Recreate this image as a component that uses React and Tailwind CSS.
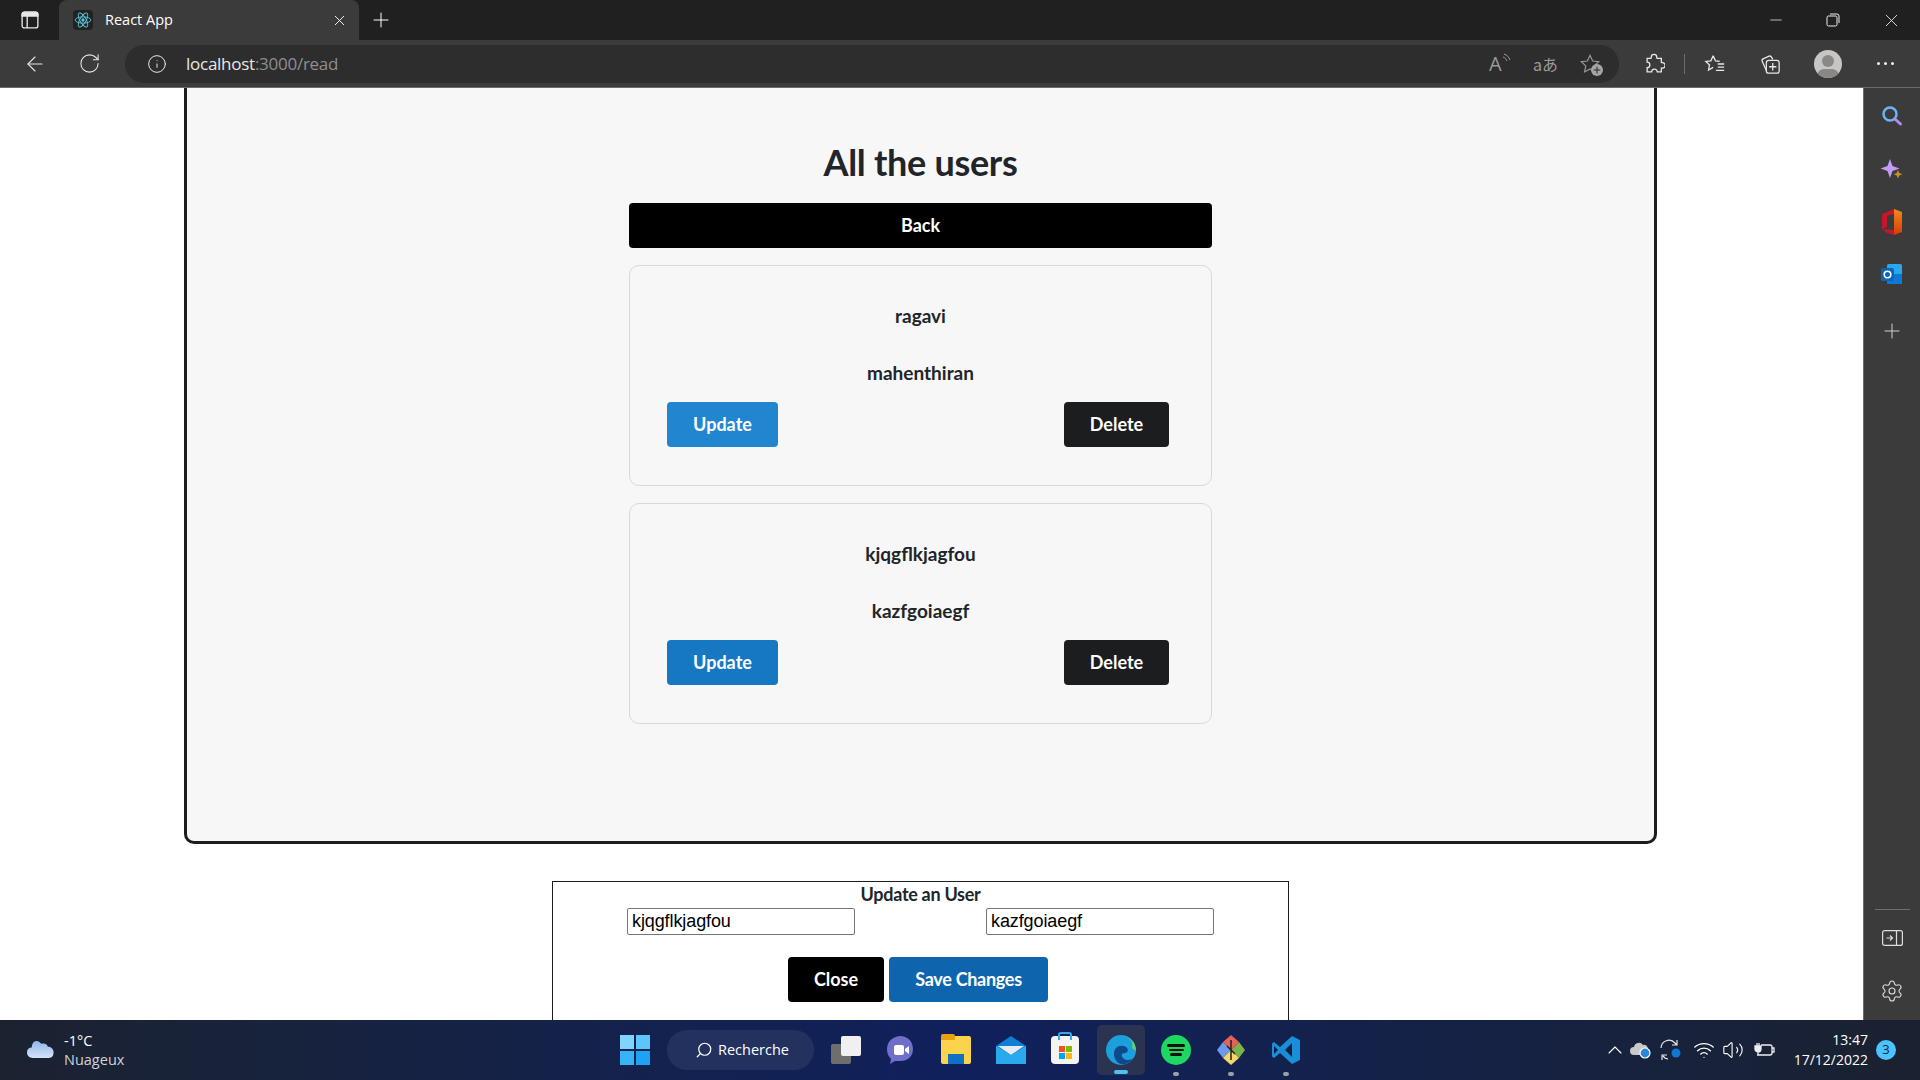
import React from "react";
import { ArrowLeft, RotateCw, Info, Plus, X, Minus, Settings, ChevronUp, Search, Wifi, Volume2 } from "lucide-react";

const lato = { fontFamily: "Lato, sans-serif" };
const openSans = { fontFamily: "'Open Sans', sans-serif" };

// browser tab strip + address bar
const ReactLogo = () => (
  <svg width="18" height="18" viewBox="-12 -12 24 24" fill="none" stroke="#58c4dc" strokeWidth="1.2">
    <circle r="2.2" fill="#58c4dc" stroke="none" />
    <ellipse rx="10.5" ry="4.2" />
    <ellipse rx="10.5" ry="4.2" transform="rotate(60)" />
    <ellipse rx="10.5" ry="4.2" transform="rotate(120)" />
  </svg>
);

const TabStrip = () => (
  <div className="flex h-10 bg-[#202020] text-white">
    <div className="flex w-[59px] items-center justify-end pr-[20px]">
      <svg width="18" height="18" viewBox="0 0 16 16" fill="none" stroke="#e8e8e8" strokeWidth="1.2">
        <rect x="1" y="1" width="14" height="14" rx="2" />
        <path d="M1 4.5h14V3a2 2 0 0 0-2-2H3a2 2 0 0 0-2 2z" fill="#e8e8e8" />
        <path d="M5.5 4.5V15" />
      </svg>
    </div>
    <div className="flex w-[300px] items-center rounded-t-lg bg-[#3b3b3b] pl-[14px] pr-[11px]">
      <div className="flex h-[20px] w-[20px] items-center justify-center rounded-sm bg-[#222]">
        <ReactLogo />
      </div>
      <span className="ml-[12px] flex-1 text-[14.5px] text-white" style={openSans}>React App</span>
      <X size={17} strokeWidth={1.3} />
    </div>
    <div className="flex w-[44px] items-center justify-center">
      <Plus size={24} strokeWidth={1} />
    </div>
    <div className="flex-1" />
    <div className="flex items-center text-[#eee]">
      <div className="flex w-[58px] justify-center pl-[2px]"><Minus size={18} strokeWidth={1} /></div>
      <div className="flex w-[58px] justify-center">
        <svg width="14" height="14" viewBox="0 0 14 14" fill="none" stroke="currentColor" strokeWidth="1">
          <rect x="1" y="3" width="10" height="10" rx="1.5" />
          <path d="M4 1h7a2 2 0 0 1 2 2v7" />
        </svg>
      </div>
      <div className="flex w-[58px] justify-center"><X size={21} strokeWidth={1} /></div>
    </div>
  </div>
);

const Toolbar = () => (
  <div className="flex h-12 items-center border-b border-[#6a6a6a] bg-[#3b3b3b] text-[#e8e8e8]">
    <div className="flex w-[125px] shrink-0 items-center pl-[23px]">
      <ArrowLeft size={24} strokeWidth={1.1} />
      <RotateCw size={23} strokeWidth={1.1} className="ml-[31px]" />
    </div>
    <div className="flex h-[38px] w-[1494px] items-center rounded-full bg-[#2d2d2d] pl-[22px] pr-[18px]">
      <Info size={20} strokeWidth={1.2} />
      <span className="ml-[19px] flex-1 text-[17px]" style={{ ...openSans, letterSpacing: "-0.26px" }}>
        localhost<span className="text-[#8e8e8e]">:3000/read</span>
      </span>
      <div className="flex items-center text-[#9a9a9a]">
        <div className="relative mr-[20px] h-[24px] w-[24px]">
          <span className="absolute left-0 top-[2px] text-[20px] leading-none" style={openSans}>A</span>
          <svg className="absolute right-0 top-[1px]" width="11" height="11" viewBox="0 0 11 11" fill="none" stroke="currentColor" strokeWidth="1">
            <path d="M2 1c3 1 5 3 6 6M1 4c2 .7 3 1.700 4 4" />
          </svg>
        </div>
        <span className="mr-[21px] text-[16px] leading-none" style={{ fontFamily: "'Noto Sans CJK JP', sans-serif" }}>aあ</span>
        <div className="relative">
          <svg width="22" height="22" viewBox="0 0 24 24" fill="none" stroke="currentColor" strokeWidth="1.3">
            <path d="M12 2.5l2.9 6.2 6.6.8-4.9 4.6 1.3 6.6-5.9-3.3-5.9 3.3 1.3-6.6-4.9-4.6 6.6-.8z" />
          </svg>
          <div className="absolute bottom-[-1px] right-[-2px] flex h-[12px] w-[12px] items-center justify-center rounded-full bg-[#a5a5a5] text-[#2d2d2d]">
            <Plus size={10} strokeWidth={2.5} />
          </div>
        </div>
      </div>
    </div>
    <div className="flex flex-1 items-center pl-[24px]">
      <svg width="22" height="22" viewBox="0 0 24 24" fill="none" stroke="currentColor" strokeWidth="1.4">
        <path d="M9 4.500a3 3 0 0 1 6 0c0 .5 0 1 .3 1.300H20v4.500c.3.3.8.3 1.200.3a2.900 2.900 0 0 1 0 5.800H20v4.100h-4.500a3 3 0 0 0-6 0H4.500V16a3 3 0 0 0 0-6V5.800h4.200C9 5.500 9 5 9 4.500z" />
      </svg>
      <div className="ml-[19px] h-[20px] w-px bg-[#6e6e6e]" />
      <svg className="ml-[19px]" width="22" height="22" viewBox="0 0 24 24" fill="none" stroke="currentColor" strokeWidth="1.4">
        <path d="M10 3l2.500 5.500 4.500.5M10 3L7.500 8.500 2 9.200l4 3.800-1 5.500 5-2.800M15 12h7M15 15.500h7M13 19h9" />
      </svg>
      <svg className="ml-[33px]" width="22" height="22" viewBox="0 0 24 24" fill="none" stroke="currentColor" strokeWidth="1.4">
        <path d="M8 19L3.500 9a2 2 0 0 1 1-2.600L11 3.500a2 2 0 0 1 2.600 1L15 7" />
        <rect x="8" y="8" width="14" height="14" rx="2.500" />
        <path d="M15 11v8M11 15h8" />
      </svg>
      <div className="relative ml-[33px] h-[28px] w-[28px] overflow-hidden rounded-full bg-[#c8c6c4]">
        <div className="mx-auto mt-[5px] h-[12px] w-[12px] rounded-full bg-[#8a8886]" />
        <div className="mx-auto mt-[2px] h-[14px] w-[22px] rounded-full bg-[#8a8886]" />
      </div>
      <div className="ml-[35px] flex gap-[4px]">
        <span className="h-[3px] w-[3px] rounded-full bg-[#eee]" />
        <span className="h-[3px] w-[3px] rounded-full bg-[#eee]" />
        <span className="h-[3px] w-[3px] rounded-full bg-[#eee]" />
      </div>
    </div>
  </div>
);

const UserCard = ({ first, last, updateBg }) => (
  <div className="mt-[17px] h-[221px] rounded-[10px] border border-[#d9d9d9] px-[37px] pt-[38px]">
    <p className="text-center text-[19px] font-bold leading-[24px] text-[#212529]">{first}</p>
    <p className="mt-[33px] text-center text-[19px] font-bold leading-[24px] text-[#212529]">{last}</p>
    <div className="mt-[17px] flex justify-between pr-[5px]">
      <button className={`h-[45px] w-[111px] rounded-[4px] text-[18px] font-bold text-white ${updateBg}`}>Update</button>
      <button className="h-[45px] w-[105px] rounded-[4px] bg-[#1c1d1f] text-[18px] font-bold text-white">Delete</button>
    </div>
  </div>
);

const Page = () => (
  <div className="h-full overflow-hidden bg-white" style={lato}>
    <div className="ml-[184px] h-[756px] w-[1473px] rounded-b-[10px] border-x-[3px] border-b-[3px] border-[#1c1d1f] bg-[#f7f7f7]">
      <div className="mx-auto w-[583px]">
        <h1 className="pt-[51px] text-center text-[36px] font-bold leading-[46px] tracking-[-0.3px] text-[#212529]">All the users</h1>
        <button className="mt-[18px] h-[45px] w-full rounded-[4px] bg-black text-[18px] font-bold text-white">Back</button>
        <UserCard first="ragavi" last="mahenthiran" updateBg="bg-[#2185d0]" />
        <UserCard first="kjqgflkjagfou" last="kazfgoiaegf" updateBg="bg-[#1678c2]" />
      </div>
    </div>
    <div className="ml-[552px] mt-[37px] h-[160px] w-[737px] border border-[#1c1d1f]">
      <p className="text-center text-[18px] font-bold leading-[24px] tracking-[-0.3px] text-[#212529]">Update an User</p>
      <div className="ml-[74px] mt-[2px] flex gap-[131px]">
        <input readOnly value="kjqgflkjagfou" className="h-[27px] w-[228px] rounded-[2px] border border-[#767676] bg-white px-[4px] text-[18px] tracking-[-0.1px] text-black" style={{ fontFamily: "'Liberation Sans', sans-serif" }} />
        <input readOnly value="kazfgoiaegf" className="h-[27px] w-[228px] rounded-[2px] border border-[#767676] bg-white px-[4px] text-[18px] tracking-[-0.1px] text-black" style={{ fontFamily: "'Liberation Sans', sans-serif" }} />
      </div>
      <div className="ml-[235px] mt-[22px] flex gap-[5px]">
        <button className="h-[45px] w-[96px] rounded-[4px] bg-black text-[18px] font-bold text-white">Close</button>
        <button className="h-[45px] w-[159px] rounded-[4px] bg-[#0f65ad] text-[18px] font-bold tracking-[-0.3px] text-white">Save Changes</button>
      </div>
    </div>
  </div>
);

const Sidebar = () => (
  <div className="flex w-[57px] shrink-0 flex-col items-center border-l border-[#6a6a6a] bg-[#3b3b3b] pt-[17px]">
    <svg width="22" height="22" viewBox="0 0 22 22" fill="none">
      <circle cx="9" cy="9" r="6.500" stroke="#6cb4f5" strokeWidth="2.500" />
      <path d="M14.500 14.500l5 4.500" stroke="#b28cf0" strokeWidth="3" strokeLinecap="round" />
    </svg>
    <svg className="mt-[31px]" width="24" height="24" viewBox="0 0 24 24">
      <path d="M10 1l2.500 7 7 2.500-7 2.500L10 20l-2.500-7-7-2.500 7-2.500z" fill="#c39cf5" />
      <path d="M18 12l1.300 3 3 1.300-3 1.300-1.300 3-1.300-3-3-1.300 3-1.300z" fill="#c8941f" />
    </svg>
    <svg className="mt-[27px]" width="22" height="26" viewBox="0 0 22 26">
      <defs>
        <linearGradient id="officeRight" x1="0" y1="0" x2="0" y2="1">
          <stop offset="0" stopColor="#f08a1d" />
          <stop offset="1" stopColor="#d83b01" />
        </linearGradient>
      </defs>
      <path d="M13 0l8 3v20l-8 3z" fill="url(#officeRight)" />
      <path d="M13 0L1 5v15l5-2V7l7-2zM13 26l-7-2-5-4 12 1z" fill="#c4162c" />
    </svg>
    <svg className="mt-[28px]" width="22" height="22" viewBox="0 0 22 22">
      <rect x="6" y="1" width="15" height="20" rx="1.500" fill="#28a8ea" />
      <path d="M6 11l15 0v8a2 2 0 0 1-2 2H6z" fill="#0f78d4" />
      <rect x="0" y="5" width="13" height="13" rx="1.500" fill="#0a64b8" />
      <circle cx="6.500" cy="11.500" r="3.300" fill="none" stroke="#fff" strokeWidth="1.600" />
    </svg>
    <Plus size={24} strokeWidth={1} className="mt-[34px] text-[#d0d0d0]" />
    <div className="flex-1" />
    <div className="h-px w-[35px] bg-[#6e6e6e]" />
    <svg className="mt-[20px]" width="21" height="16" viewBox="0 0 21 16" fill="none" stroke="#ddd" strokeWidth="1.200">
      <rect x=".6" y=".6" width="19.800" height="14.800" rx="2" />
      <path d="M14.500 .6v14.800M4.500 8h6M8 5.500L10.500 8 8 10.500" />
    </svg>
    <Settings size={24} strokeWidth={1.1} className="mb-[17px] mt-[33px] text-[#ddd]" />
  </div>
);

const Dot = () => <span className="absolute bottom-[-11px] h-[4px] w-[6px] rounded-full bg-[#9aa0aa]" />;

const Taskbar = () => (
  <div className="flex h-[60px] items-center bg-gradient-to-r from-[#1b2230] via-[#10205c] to-[#1a2130] text-white" style={openSans}>
    <div className="flex w-[600px] items-center pl-[26px]">
      <svg width="30" height="20" viewBox="0 0 30 20">
        <defs>
          <linearGradient id="cloudFill" x1="0" y1="0" x2="0" y2="1">
            <stop offset="0" stopColor="#8fb6ea" />
            <stop offset="1" stopColor="#d4e4f8" />
          </linearGradient>
        </defs>
        <path d="M7 2C10 0 13 1 15 4c3-1 6 0 7 3 3 0 6 2 6 6 0 4-2 6-5 6H6c-3 0-6-2-6-6 0-3 2-5 5-5 0-3 1-5 2-6z" transform="translate(1 0) scale(.95)" fill="url(#cloudFill)" />
      </svg>
      <div className="ml-[8px] text-[14.5px] leading-[19px]">
        <div>-1°C</div>
        <div className="text-[#cfd3da]">Nuageux</div>
      </div>
    </div>
    <div className="flex flex-1 items-center pl-[20px]">
      <div className="grid grid-cols-2 gap-[2px]">
        <span className="h-[14px] w-[14px] bg-[#7fd4fb]" />
        <span className="h-[14px] w-[14px] bg-[#5cc5fa]" />
        <span className="h-[14px] w-[14px] bg-[#39b3f8]" />
        <span className="h-[14px] w-[14px] bg-[#1ea2f3]" />
      </div>
      <div className="ml-[17px] flex h-[40px] w-[147px] items-center rounded-full bg-[#23315f] pl-[28px] text-[14.5px]">
        <Search size={18} strokeWidth={1.6} className="-scale-x-100" />
        <span className="ml-[5px]">Recherche</span>
      </div>
      <div className="relative ml-[17px] h-[28px] w-[30px]">
        <div className="absolute bottom-0 left-0 h-[20px] w-[20px] rounded-[2px] bg-[#6e6e6e]" />
        <div className="absolute right-0 top-0 h-[20px] w-[20px] rounded-[2px] bg-[#f0f0f0]" />
      </div>
      <svg className="ml-[25px]" width="29" height="30" viewBox="0 0 29 30">
        <path d="M14.500 1C21 1 27 6 27 14c0 8-6 12-12 12H9l-5 3 1-5C2 21 1 18 1 14 1 6 8 1 14.500 1z" fill="#6f6ec9" />
        <rect x="8" y="10" width="10" height="10" rx="2" fill="#fff" />
        <path d="M19 14l4-3v8l-4-3z" fill="#fff" />
      </svg>
      <div className="relative ml-[26px] h-[28px] w-[30px] rounded-[2px] bg-[#fcd34d]">
        <div className="absolute left-0 top-[-2px] h-[6px] w-[14px] rounded-t-[2px] bg-[#e5a30c]" />
        <div className="absolute bottom-0 left-[7px] h-[10px] w-[16px] bg-[#1071c4]" />
      </div>
      <svg className="ml-[25px]" width="30" height="28" viewBox="0 0 30 28">
        <path d="M15 0l15 10v18H0V10z" fill="#0f7fd6" />
        <path d="M2 10h26l-13 9z" fill="#e6ecf4" />
        <path d="M0 10l15 9 15-9v18H0z" fill="#2aa9ee" />
      </svg>
      <div className="relative ml-[25px] h-[28px] w-[28px] rounded-[4px] bg-[#f4f4f4]">
        <div className="absolute left-[7px] top-[-4px] h-[8px] w-[14px] rounded-t-[3px] border-x-2 border-t-2 border-[#3aa7e8]" />
        <div className="absolute left-[8px] top-[10px] grid grid-cols-2 gap-px">
          <span className="h-[6px] w-[6px] bg-[#f25022]" />
          <span className="h-[6px] w-[6px] bg-[#7fba00]" />
          <span className="h-[6px] w-[6px] bg-[#00a4ef]" />
          <span className="h-[6px] w-[6px] bg-[#ffb900]" />
        </div>
      </div>
      <div className="relative ml-[18px] flex h-[50px] w-[48px] items-center justify-center rounded-[5px] bg-[#2a3350]">
        <svg width="30" height="30" viewBox="0 0 30 30">
          <circle cx="15" cy="15" r="15" fill="#1b9fdd" />
          <path d="M30 16c0-9-7-15-14-15C24 1 28 8 26 13z" fill="#6ad06a" />
          <path d="M8 19c0-7 6-10 12-7 3 2 2 6-1 6-6 0-3 7 3 7 3 0 5-1 6-3-3 6-9 8-13 7-4-1-7-5-7-10z" fill="#0e4a8a" />
        </svg>
        <span className="absolute bottom-[1px] h-[4px] w-[14px] rounded-full bg-[#4fc0f5]" />
      </div>
      <div className="relative ml-[15px] flex w-[32px] justify-center">
        <div className="h-[30px] w-[30px] rounded-full bg-[#1ed760]">
          <div className="mx-auto mt-[9px] h-[2.500px] w-[18px] rounded-full bg-[#111]" />
          <div className="mx-auto mt-[2px] h-[2.500px] w-[15px] rounded-full bg-[#111]" />
          <div className="mx-auto mt-[2px] h-[2.500px] w-[12px] rounded-full bg-[#111]" />
        </div>
        <Dot />
      </div>
      <div className="relative ml-[23px] flex w-[32px] justify-center">
        <svg width="30" height="30" viewBox="0 0 30 30">
          <path d="M15 15L7 7 1 15l6 8z" fill="#6d9ae8" />
          <path d="M15 15l8-8 6 8-6 8z" fill="#7cb34a" />
          <path d="M15 15L7 7l8-7 8 7z" fill="#e8625c" />
          <path d="M15 15l8 8-8 7-8-7z" fill="#f5d76e" />
          <path d="M15 5v20M11 11l8 8" stroke="#222" strokeWidth="1.500" />
        </svg>
        <Dot />
      </div>
      <div className="relative ml-[23px] flex w-[32px] justify-center">
        <svg width="30" height="30" viewBox="0 0 30 30">
          <path d="M21 1l8 4v20l-8 4L9 18l-6 5-2-1.500V8.500L3 7l6 5z" fill="#1a8ed8" />
          <path d="M21 8l-7 7 7 7z" fill="#10223f" />
          <path d="M3 11v8l4-4z" fill="#10223f" />
        </svg>
        <Dot />
      </div>
    </div>
    <div className="flex items-center pr-[24px]">
      <ChevronUp size={24} strokeWidth={1.1} />
      <svg className="ml-[2px]" width="24" height="18" viewBox="0 0 24 18">
        <path d="M5 14a4 4 0 0 1 0-8 5 5 0 0 1 9-2 4 4 0 0 1 5 4v6z" fill="#c9c9c9" />
        <circle cx="16" cy="12" r="5" fill="#2b88d8" stroke="#fff" strokeWidth="1.200" />
      </svg>
      <svg className="ml-[7px]" width="22" height="22" viewBox="0 0 22 22" fill="none" stroke="#e8e8e8" strokeWidth="1.200">
        <path d="M1 9a8 8 0 0 1 14-5l2 2M17 1v5h-5M3 17l2 2a8 8 0 0 0 3 1M2 21v-5h5" />
        <circle cx="16" cy="14" r="4.500" fill="#0f78d4" stroke="none" />
      </svg>
      <Wifi size={22} strokeWidth={1.5} className="ml-[11px]" />
      <Volume2 size={22} strokeWidth={1.2} className="ml-[7px]" />
      <svg className="ml-[10px]" width="21" height="16" viewBox="0 0 21 16" fill="none" stroke="#eee" strokeWidth="1.300">
        <path d="M7 3h9a2 2 0 0 1 2 2v6a2 2 0 0 1-2 2H3M18 6h2v4h-2" />
        <path d="M1 4h6v3a3 3 0 0 1-6 0zM3 1v3M5 1v3M4 10v3" fill="#eee" />
      </svg>
      <div className="ml-[18px] w-[75px] text-right text-[14px] leading-[20px]">
        <div>13:47</div>
        <div>17/12/2022</div>
      </div>
      <div className="ml-[8px] flex h-[20px] w-[20px] items-center justify-center rounded-full bg-[#4cc2ff] text-[13px] text-[#10223f]">3</div>
    </div>
  </div>
);

const App = () => {
  return (
    <div className="flex h-screen w-full flex-col overflow-hidden">
      <TabStrip />
      <Toolbar />
      <div className="flex min-h-0 flex-1">
        <div className="min-w-0 flex-1"><Page /></div>
        <Sidebar />
      </div>
      <Taskbar />
    </div>
  );
};

export default App;
